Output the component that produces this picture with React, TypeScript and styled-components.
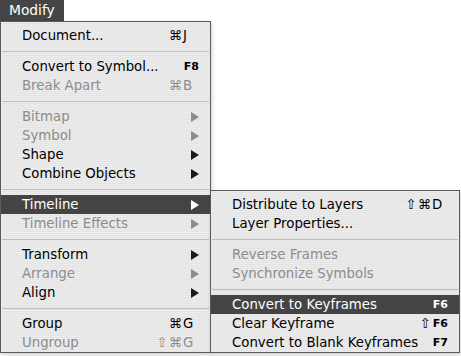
import React from "react";
import styled, { createGlobalStyle } from "styled-components";

const GlobalStyle = createGlobalStyle`
  html, body { margin: 0; padding: 0; background: #ffffff; }
  body { font-family: "DejaVu Sans", "Liberation Sans", sans-serif; }
`;

const Page = styled.div`
  width: 461px;
  height: 356px;
  overflow: hidden;
  display: flex;
  flex-direction: column;
  align-items: flex-start;
`;

const MenuTitle = styled.div`
  height: 21px;
  width: 55px;
  padding-left: 9px;
  background: #454545;
  color: #ffffff;
  font-size: 13.8px;
  line-height: 21px;
`;

const MenuArea = styled.div`
  display: flex;
  align-items: flex-start;
`;

const Menu = styled.div<{ $width: number; $top?: number; $left?: number }>`
  box-sizing: border-box;
  width: ${(p) => p.$width}px;
  margin-top: ${(p) => p.$top ?? 0}px;
  margin-left: ${(p) => p.$left ?? 0}px;
  border: 1px solid #5a5a5a;
  padding: 4px 0 0 0;
  background: repeating-linear-gradient(
    to bottom,
    #ececec 0px,
    #ececec 1px,
    #e4e4e4 1px,
    #e4e4e4 2px
  );
  box-shadow: 1px 2px 4px rgba(0, 0, 0, 0.18);
  position: relative;
`;

const Item = styled.div<{ $disabled?: boolean; $active?: boolean }>`
  height: 19px;
  display: flex;
  align-items: center;
  padding: 0 11px 0 21px;
  font-size: 13.3px;
  color: ${(p) => (p.$active ? "#ffffff" : p.$disabled ? "#8c8c8c" : "#000000")};
  background: ${(p) => (p.$active ? "#444444" : "transparent")};
  white-space: nowrap;
`;

const Label = styled.span`
  flex: 1;
`;

const Mods = styled.span`
  font-size: 13.3px;
  letter-spacing: 1px;
`;

const KeyChar = styled.span<{ $fkey?: boolean }>`
  width: 16px;
  display: inline-block;
  text-align: ${(p) => (p.$fkey ? "right" : "left")};
  font-size: ${(p) => (p.$fkey ? "11px" : "13.3px")};
  font-weight: ${(p) => (p.$fkey ? "bold" : "normal")};
`;

const Separator = styled.div`
  height: 12px;
  display: flex;
  align-items: center;
  padding: 0 1px;
  &::after {
    content: "";
    flex: 1;
    height: 1px;
    background: #bdbdbd;
  }
`;

const Arrow = ({ color }: { color: string }) => (
  <svg width="8" height="10" viewBox="0 0 8 10">
    <polygon points="0,0 8,5 0,10" fill={color} />
  </svg>
);

type Entry =
  | { sep: true }
  | {
      label: string;
      mods?: string;
      char?: string;
      fkey?: boolean;
      sub?: boolean;
      disabled?: boolean;
      active?: boolean;
    };

const mainItems: Entry[] = [
  { label: "Document...", mods: "⌘", char: "J" },
  { sep: true },
  { label: "Convert to Symbol...", char: "F8", fkey: true },
  { label: "Break Apart", mods: "⌘", char: "B", disabled: true },
  { sep: true },
  { label: "Bitmap", sub: true, disabled: true },
  { label: "Symbol", sub: true, disabled: true },
  { label: "Shape", sub: true },
  { label: "Combine Objects", sub: true },
  { sep: true },
  { label: "Timeline", sub: true, active: true },
  { label: "Timeline Effects", sub: true, disabled: true },
  { sep: true },
  { label: "Transform", sub: true },
  { label: "Arrange", sub: true, disabled: true },
  { label: "Align", sub: true },
  { sep: true },
  { label: "Group", mods: "⌘", char: "G" },
  { label: "Ungroup", mods: "⇧⌘", char: "G", disabled: true },
];

const subItems: Entry[] = [
  { label: "Distribute to Layers", mods: "⇧⌘", char: "D" },
  { label: "Layer Properties..." },
  { sep: true },
  { label: "Reverse Frames", disabled: true },
  { label: "Synchronize Symbols", disabled: true },
  { sep: true },
  { label: "Convert to Keyframes", char: "F6", fkey: true, active: true },
  { label: "Clear Keyframe", mods: "⇧", char: "F6", fkey: true },
  { label: "Convert to Blank Keyframes", char: "F7", fkey: true },
];

const renderItems = (items: Entry[]) =>
  items.map((it, i) => {
    if ("sep" in it) return <Separator key={i} />;
    const color = it.active ? "#ffffff" : it.disabled ? "#8c8c8c" : "#1a1a1a";
    return (
      <Item key={i} $disabled={it.disabled} $active={it.active}>
        <Label>{it.label}</Label>
        {it.mods && <Mods>{it.mods}</Mods>}
        {it.char && <KeyChar $fkey={it.fkey}>{it.char}</KeyChar>}
        {it.sub && <Arrow color={color} />}
      </Item>
    );
  });

export default function App() {
  return (
    <>
      <GlobalStyle />
      <Page>
        <MenuTitle>Modify</MenuTitle>
        <MenuArea>
          <Menu $width={211}>{renderItems(mainItems)}</Menu>
          <Menu $width={250} $top={169} $left={-1}>
            {renderItems(subItems)}
          </Menu>
        </MenuArea>
      </Page>
    </>
  );
}
